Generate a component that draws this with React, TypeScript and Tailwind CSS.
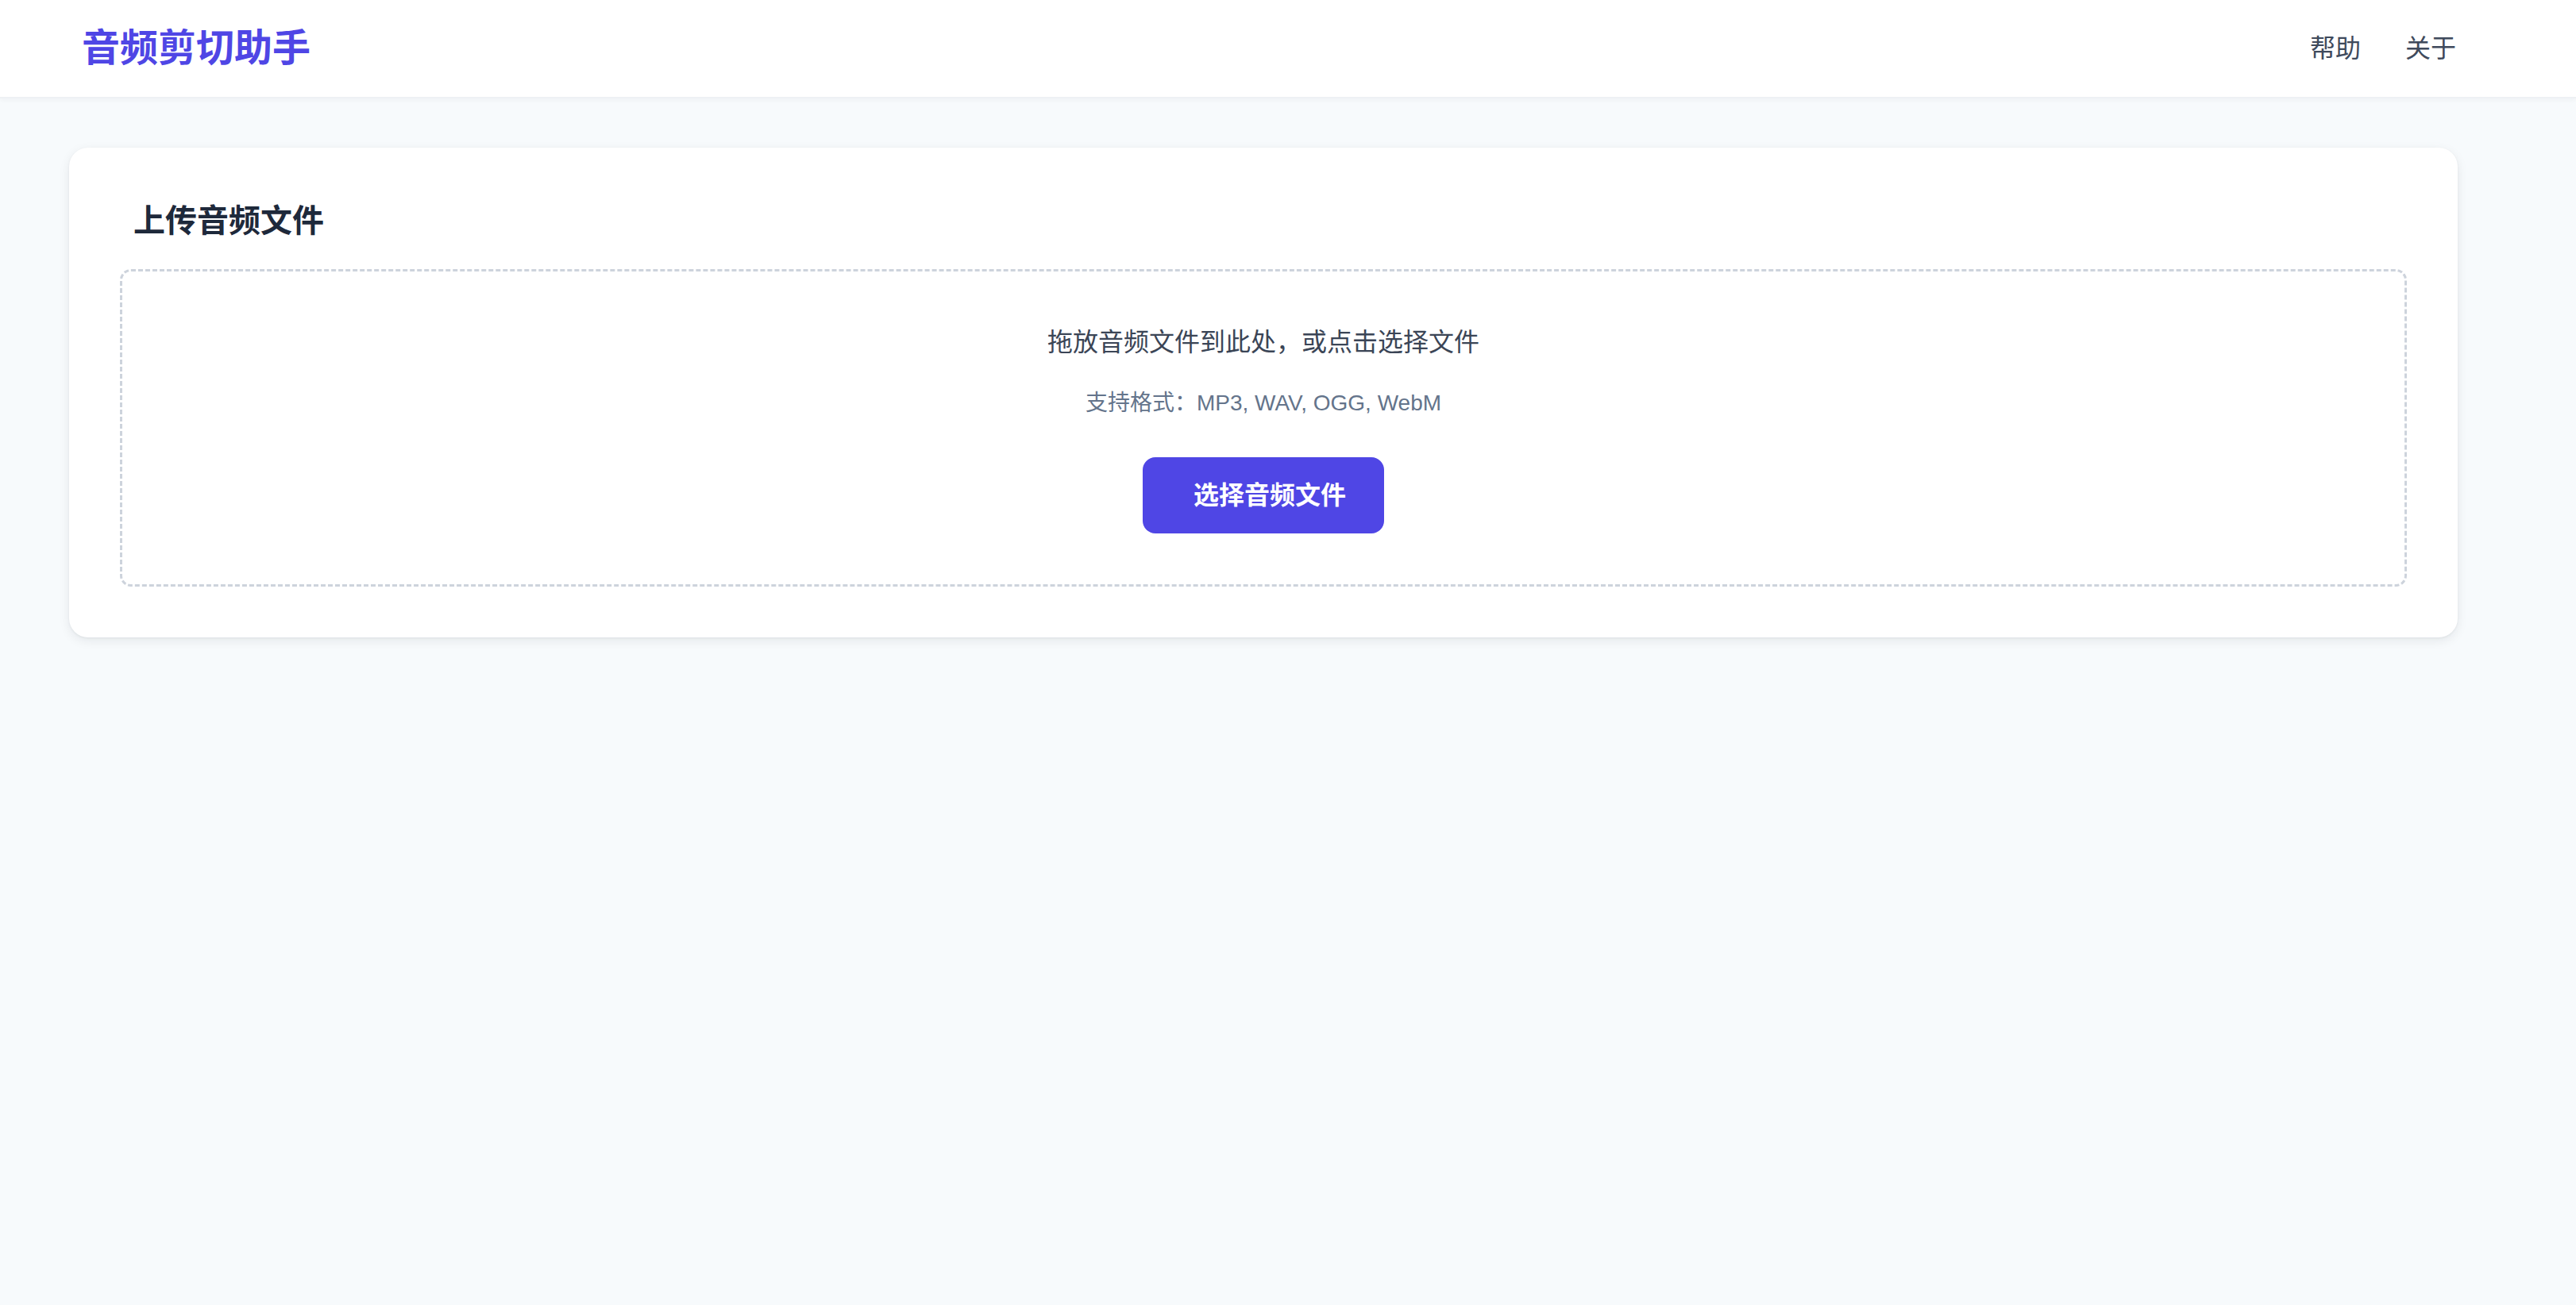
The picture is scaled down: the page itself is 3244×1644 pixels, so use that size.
import { useRef } from "react";

const font = { fontFamily: '"Liberation Sans", "Noto Sans CJK SC", sans-serif' };

const Header = () => {
  return (
    <header className="bg-white border-b-2 border-[#eef1f4] shadow-[0_2px_6px_rgba(15,23,42,0.04)]">
      <div className="h-[122px] flex items-center justify-between pl-[103px] pr-[151px]">
        <h1 className="text-[48px] leading-[64px] font-bold text-[#4f46e5]">音频剪切助手</h1>
        <nav className="flex items-center gap-[56px] text-[32px] leading-[48px] text-[#3f4a5c]">
          <a href="#" className="hover:text-[#4f46e5]">帮助</a>
          <a href="#" className="hover:text-[#4f46e5]">关于</a>
        </nav>
      </div>
    </header>
  );
};

const UploadCard = () => {
  const inputRef = useRef<HTMLInputElement>(null);

  return (
    <section className="ml-[87px] w-[3008px] bg-white rounded-[24px] shadow-[0_4px_14px_rgba(15,23,42,0.08),0_1px_3px_rgba(15,23,42,0.06)] p-[64px]">
      <h2 className="pl-[17px] text-[40px] leading-[56px] font-bold text-[#1e293b] mb-[33px]">上传音频文件</h2>
      <div className="border-[3px] border-dashed border-[#cdd3dc] rounded-[14px] px-[64px] pt-[65px] pb-[64px] flex flex-col items-center">
        <p className="text-[32px] leading-[48px] text-[#3b4556]">拖放音频文件到此处，或点击选择文件</p>
        <p className="mt-[33px] text-[28px] leading-[40px] text-[#64748b]">支持格式：MP3, WAV, OGG, WebM</p>
        <button
          onClick={() => inputRef.current?.click()}
          className="mt-[48px] h-[96px] pl-[64px] pr-[48px] rounded-[16px] bg-[#4f46e5] text-white text-[32px] leading-[48px] font-bold"
        >
          选择音频文件
        </button>
        <input ref={inputRef} type="file" accept="audio/*" className="hidden" />
      </div>
    </section>
  );
};

export default function App() {
  return (
    <div className="min-h-screen bg-[#f7fafc]" style={font}>
      <Header />
      <main className="pt-[62px] pb-[64px]">
        <UploadCard />
      </main>
    </div>
  );
}
